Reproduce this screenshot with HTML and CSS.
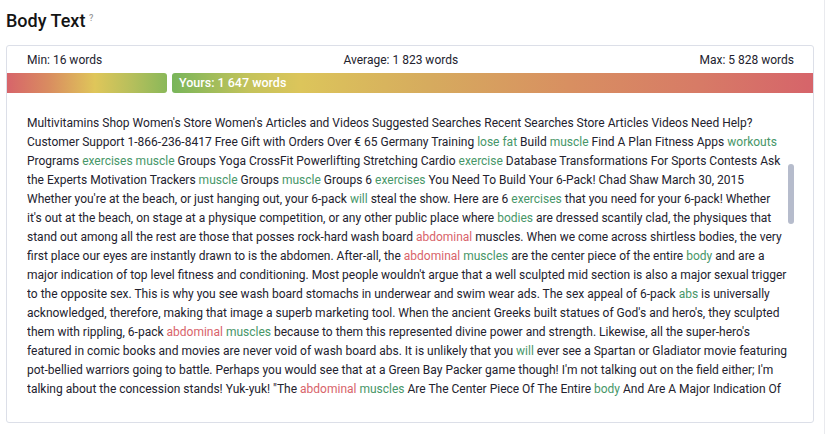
FILE: index.html
```html
<!DOCTYPE html>
<html lang="en">
<head>
<meta charset="utf-8">
<title>Body Text</title>
<link rel="stylesheet" href="styles.css">
</head>
<body>
<div class="page">
  <h2 class="title">Body Text <span class="help">?</span></h2>
  <section class="card">
    <div class="stats">
      <span>Min: 16 words</span>
      <span>Average: 1 823 words</span>
      <span>Max: 5 828 words</span>
    </div>
    <div class="bar">
      <div class="seg seg-low"></div>
      <div class="seg seg-yours">Yours: 1 647 words</div>
    </div>
    <div class="text-wrap">
      <div class="text">Multivitamins Shop Women's Store Women's Articles and Videos Suggested Searches Recent Searches Store Articles Videos Need Help?<br>
Customer Support 1-866-236-8417 Free Gift with Orders Over € 65 Germany Training <span class="kw">lose fat</span> Build <span class="kw">muscle</span> Find A Plan Fitness Apps <span class="kw">workouts</span><br>
Programs <span class="kw">exercises</span> <span class="kw">muscle</span> Groups Yoga CrossFit Powerlifting Stretching Cardio <span class="kw">exercise</span> Database Transformations For Sports Contests Ask<br>
the Experts Motivation Trackers <span class="kw">muscle</span> Groups <span class="kw">muscle</span> Groups 6 <span class="kw">exercises</span> You Need To Build Your 6-Pack! Chad Shaw March 30, 2015<br>
Whether you're at the beach, or just hanging out, your 6-pack <span class="kw">will</span> steal the show. Here are 6 <span class="kw">exercises</span> that you need for your 6-pack! Whether<br>
it's out at the beach, on stage at a physique competition, or any other public place where <span class="kw">bodies</span> are dressed scantily clad, the physiques that<br>
stand out among all the rest are those that posses rock-hard wash board <span class="kw-bad">abdominal</span> muscles. When we come across shirtless bodies, the very<br>
first place our eyes are instantly drawn to is the abdomen. After-all, the <span class="kw-bad">abdominal</span> <span class="kw">muscles</span> are the center piece of the entire <span class="kw">body</span> and are a<br>
major indication of top level fitness and conditioning. Most people wouldn't argue that a well sculpted mid section is also a major sexual trigger<br>
to the opposite sex. This is why you see wash board stomachs in underwear and swim wear ads. The sex appeal of 6-pack <span class="kw">abs</span> is universally<br>
acknowledged, therefore, making that image a superb marketing tool. When the ancient Greeks built statues of God's and hero's, they sculpted<br>
them with rippling, 6-pack <span class="kw-bad">abdominal</span> <span class="kw">muscles</span> because to them this represented divine power and strength. Likewise, all the super-hero's<br>
featured in comic books and movies are never void of wash board abs. It is unlikely that you <span class="kw">will</span> ever see a Spartan or Gladiator movie featuring<br>
pot-bellied warriors going to battle. Perhaps you would see that at a Green Bay Packer game though! I'm not talking out on the field either; I'm<br>
talking about the concession stands! Yuk-yuk! "The <span class="kw-bad">abdominal</span> <span class="kw">muscles</span> Are The Center Piece Of The Entire <span class="kw">body</span> And Are A Major Indication Of<br>
Top Level Fitness And Conditioning."</div>
      <div class="thumb"></div>
    </div>
  </section>
</div>
</body>
</html>
```
FILE: styles.css
```css
html, body {
  margin: 0;
  padding: 0;
  background: #ffffff;
}
body {
  font-family: Roboto, "Liberation Sans", Arial, sans-serif;
  color: #23222e;
}
.page {
  width: 825px;
  height: 434px;
  padding: 8px 0 0 6px;
  box-sizing: border-box;
  border-right: 1px solid #e9eaee;
}
.title {
  margin: 0;
  font-size: 18px;
  line-height: 21px;
  font-weight: 500;
  color: #141414;
}
.help {
  font-size: 9px;
  color: #9a9a9a;
  vertical-align: 6px;
  font-weight: 500;
  margin-left: -1px;
}
.card {
  margin-top: 14px;
  width: 808px;
  box-sizing: border-box;
  border: 1px solid #dcdfe8;
  border-radius: 3px;
  overflow: hidden;
}
.stats {
  display: flex;
  justify-content: space-between;
  padding: 0 19px 0 20px;
  height: 27px;
  align-items: center;
  font-size: 12px;
  color: #23222e;
}
.bar {
  display: flex;
  gap: 5px;
  height: 20px;
}
.seg {
  height: 20px;
}
.seg-low {
  width: 160px;
  border-radius: 0 3px 3px 0;
  background: linear-gradient(90deg, #d7646a 0%, #d98c60 26%, #dfc65a 55%, #b6bf5c 78%, #8ab859 100%);
}
.seg-yours {
  flex: 1;
  border-radius: 3px 0 0 3px;
  background: linear-gradient(90deg, #78b55a 0%, #c4c35b 12%, #dcc55b 20%, #d6ab5e 40%, #d88f61 62%, #d77b66 82%, #d6646a 100%);
  color: #ffffff;
  font-size: 12.5px;
  font-weight: 500;
  line-height: 20px;
  padding-left: 7px;
}
.text-wrap {
  position: relative;
  padding: 21px 26px 23px 20px;
}
.text {
  width: 762px;
  height: 285px;
  overflow: hidden;
  font-size: 12px;
  line-height: 19px;
  color: #23222e;
}
.kw {
  color: #479668;
}
.kw-bad {
  color: #d8636a;
}
.thumb {
  position: absolute;
  left: 781px;
  top: 71px;
  width: 6px;
  height: 60px;
  border-radius: 3px;
  background: #b6bccc;
}
```
